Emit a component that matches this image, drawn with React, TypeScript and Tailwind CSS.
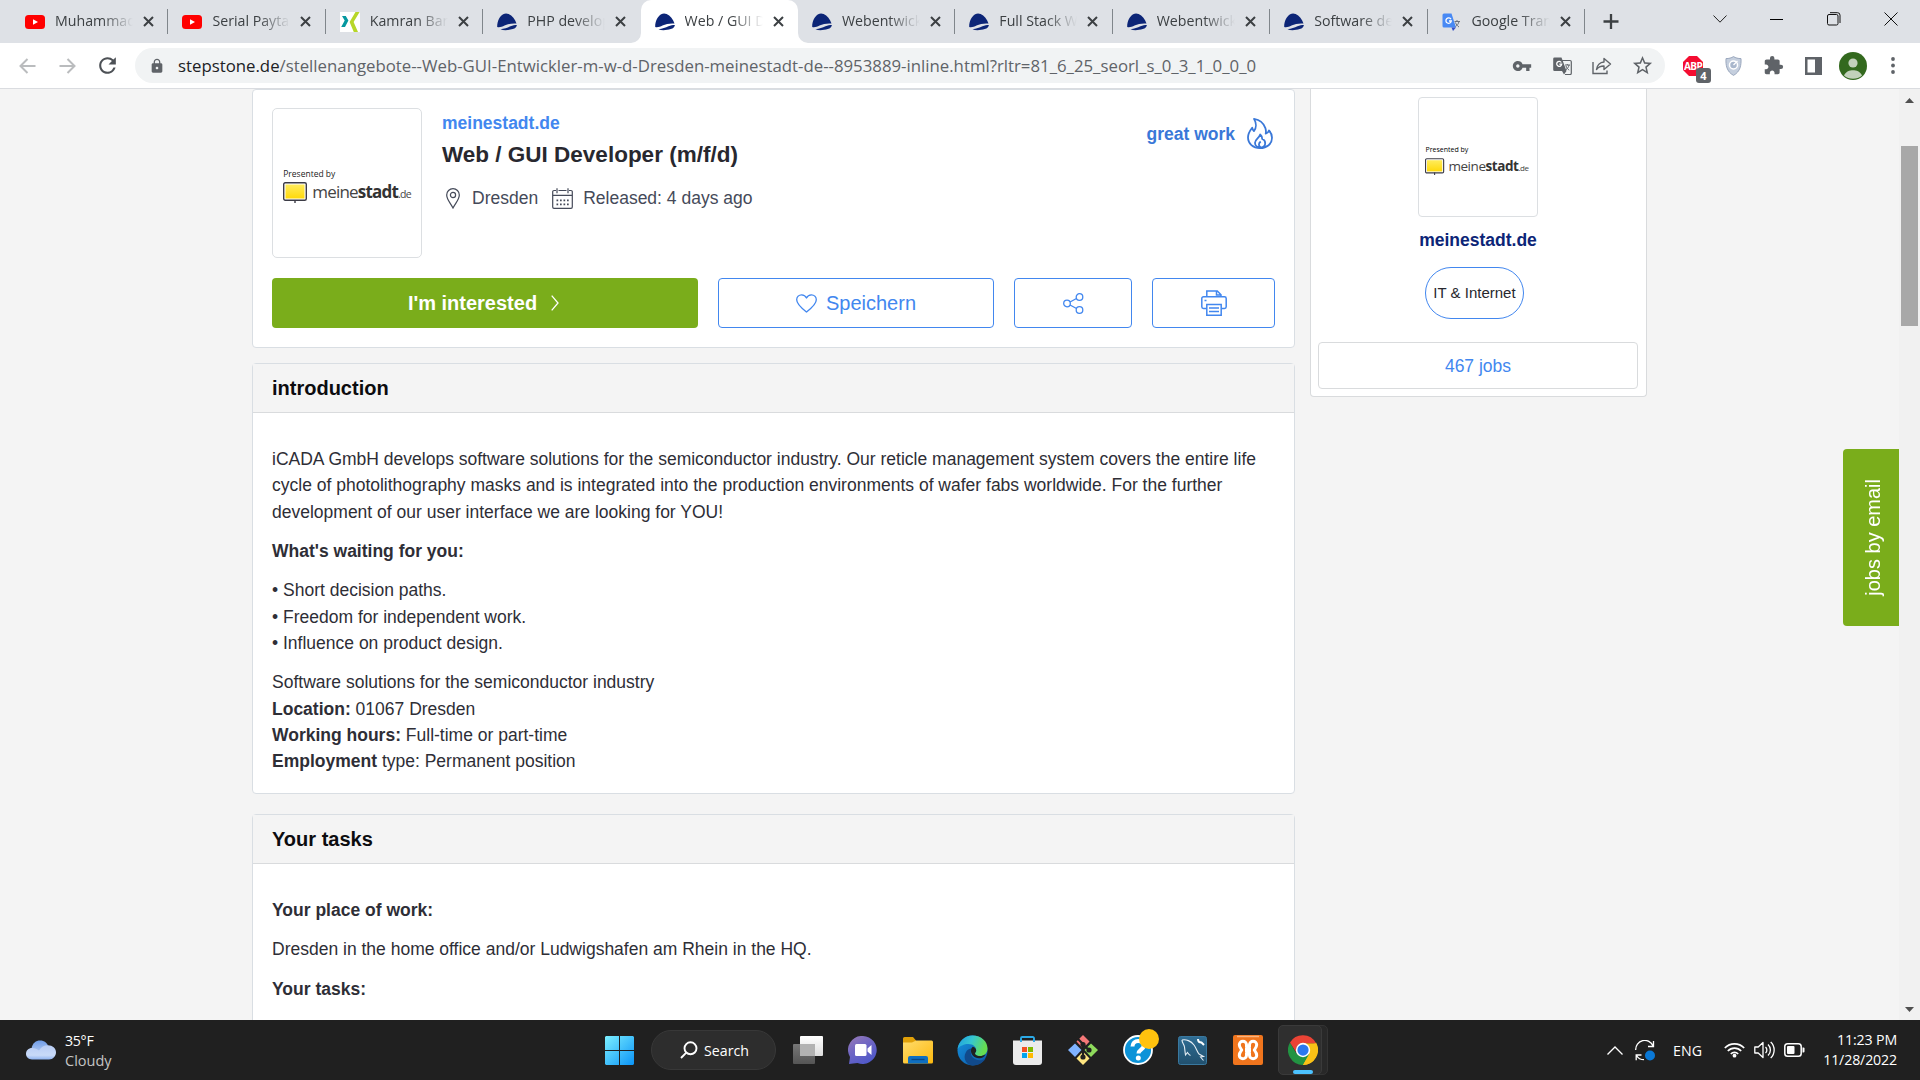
import React from "react";
import { MdVpnKey, MdExtension, MdLock, MdStarOutline, MdRefresh } from "react-icons/md";

const arial = "font-['Liberation_Sans',Arial,sans-serif]";
const ui = "font-['Open_Sans','Noto_Sans',sans-serif]";

/* ---------- favicons ---------- */

function YouTubeIcon() {
  return (
    <svg width="20" height="20" viewBox="0 0 20 20">
      <rect x="0" y="3" width="20" height="14" rx="3.5" fill="#f00" />
      <path d="M8 7.2v5.6l5-2.8z" fill="#fff" />
    </svg>
  );
}

function XingIcon() {
  return (
    <svg width="20" height="20" viewBox="0 0 20 20">
      <rect width="20" height="20" fill="#fff" />
      <path d="M2 4h3.8l2.6 4.6L5 15H1.2l3.5-6.4z" fill="#0698a0" />
      <path d="M15.5 0H19.6l-6 10 4.4 10h-4.2L9.6 10z" fill="#b7d629" />
    </svg>
  );
}

function StepstoneIcon() {
  return (
    <svg width="20" height="20" viewBox="0 0 20 20">
      <path d="M0.2 15C0 9 3 4 6.200 2.200c1.600-.9 3.600-1 5.400-.2 3.600 1.600 6.600 5.400 7.900 9.600C15 11.200 11 12 7.500 13.600 5 14.800 2.500 15.600.2 15z" fill="#0c2577" />
      <path d="M3.500 17.300c4-.4 7-1.700 10-3 2.200-.9 4.200-1.400 6.400-1.400-.2 2-1.600 3.300-4.200 4.100-3.600 1.100-8.600 1.800-12.200.3z" fill="#0c2577" />
    </svg>
  );
}

function TranslateFavicon() {
  return (
    <svg width="20" height="20" viewBox="0 0 20 20">
      <path d="M7 4.500h10.500a1.500 1.500 0 0 1 1.500 1.500v11a1.500 1.500 0 0 1-1.500 1.500H12z" fill="#dfe1e5" />
      <path d="M2 1.500h7.500L14 15.500H2A1.500 1.500 0 0 1 .5 14V3A1.500 1.500 0 0 1 2 1.500z" fill="#4889f4" />
      <path d="M9.500 15.500H14l-3 3.500z" fill="#3450c8" />
      <path d="M9 7.300A2.700 2.700 0 1 0 9.300 9H7" fill="none" stroke="#fff" strokeWidth="1.300" />
      <path d="M12.500 9.500h5.500M15 8v1.500M17 9.500c-.5 2.500-2 4-3.500 5M13.500 10.500c.5 2 2 3.500 3.500 4.500" fill="none" stroke="#6b7280" strokeWidth="1" />
    </svg>
  );
}

const tabs = [
  { title: "Muhammad", icon: "yt" },
  { title: "Serial Paytaht", icon: "yt" },
  { title: "Kamran Bang", icon: "xing" },
  { title: "PHP develop", icon: "step" },
  { title: "Web / GUI De", icon: "step", active: true },
  { title: "Webentwickl", icon: "step" },
  { title: "Full Stack We", icon: "step" },
  { title: "Webentwickl", icon: "step" },
  { title: "Software dev", icon: "step" },
  { title: "Google Trans", icon: "gt" },
];

function Favicon({ kind }: { kind: string }) {
  if (kind === "yt") return <YouTubeIcon />;
  if (kind === "xing") return <XingIcon />;
  if (kind === "gt") return <TranslateFavicon />;
  return <StepstoneIcon />;
}

function TabStrip() {
  return (
    <div className="flex h-[43px] bg-[#dee1e6] pl-[11px]">
      {tabs.map((t, i) => (
        <div
          key={i}
          className={
            "relative flex h-[43px] w-[157.400px] shrink-0 items-center pl-[14px] " +
            (t.active ? "rounded-t-[10px] bg-white" : "")
          }
        >
          {t.active && (
            <>
              <svg className="absolute bottom-0 -left-[10px]" width="10" height="10"><path d="M10 0v10H0A10 10 0 0 0 10 0z" fill="#fff" /></svg>
              <svg className="absolute bottom-0 -right-[10px]" width="10" height="10"><path d="M0 0v10h10A10 10 0 0 1 0 0z" fill="#fff" /></svg>
            </>
          )}
          <Favicon kind={t.icon} />
          <span className="mb-[2px] ml-[10px] w-[78px] overflow-hidden text-[14.200px] leading-5 whitespace-nowrap text-[#3c4043] [mask-image:linear-gradient(to_right,black_60%,transparent)]">
            {t.title}
          </span>
          <svg className="ml-[10px]" width="11" height="11" viewBox="0 0 11 11">
            <path d="M1 1l9 9M10 1l-9 9" stroke="#3c4043" strokeWidth="2" />
          </svg>
          {!t.active && i !== 3 && <div className="absolute top-[9px] right-0 h-[25px] w-px bg-[#80868b]" />}
        </div>
      ))}
      <svg className="mt-[14px] ml-[18px]" width="16" height="15" viewBox="0 0 16 15">
        <path d="M8 0v15M0.500 7.500h15" stroke="#3c4043" strokeWidth="2.300" />
      </svg>
      <div className="ml-auto flex h-[38px] items-center">
        <div className="flex w-[57px] justify-center"><svg width="14" height="8" viewBox="0 0 14 8"><path d="M.5.5L7 7.200 13.500.5" fill="none" stroke="#222" /></svg></div>
        <div className="flex w-[57px] justify-center"><div className="h-px w-[13px] bg-black" /></div>
        <div className="flex w-[57px] justify-center">
          <svg width="14" height="14" viewBox="0 0 14 14" fill="none" stroke="#111">
            <rect x=".5" y="2.500" width="10.500" height="10.500" rx="1.500" />
            <path d="M3 .7h7.500A2.500 2.500 0 0 1 13 3.200V11" />
          </svg>
        </div>
        <div className="flex w-[58px] justify-center"><svg width="14" height="14" viewBox="0 0 14 14"><path d="M.5.5l13 13M13.500.5l-13 13" stroke="#111" /></svg></div>
      </div>
    </div>
  );
}

function Cell({ children }: { children: React.ReactNode }) {
  return <div className="relative flex w-10 items-center justify-center">{children}</div>;
}

function Toolbar() {
  return (
    <div className="flex h-[46px] items-center border-b border-[#dadce0] bg-white pl-[7px] text-[#5f6368]">
      <Cell>
        <svg width="17" height="16" viewBox="0 0 17 16" fill="none" stroke="#babcbe" strokeWidth="2"><path d="M16.500 8H1.500M8.500 1L1.500 8l7 7" /></svg>
      </Cell>
      <Cell>
        <svg width="17" height="16" viewBox="0 0 17 16" fill="none" stroke="#babcbe" strokeWidth="2"><path d="M.5 8h15M8.500 1l7 7-7 7" /></svg>
      </Cell>
      <Cell><MdRefresh size={25} color="#4d5156" /></Cell>
      <div className="ml-[8px] flex h-[35px] w-[1530px] items-center rounded-full bg-[#f1f3f4] pl-[14px]">
        <MdLock size={16} />
        <span className="ml-[13px] text-[16.800px] leading-6 whitespace-nowrap">
          <span className="text-[#202124]">stepstone.de</span>
          /stellenangebote--Web-GUI-Entwickler-m-w-d-Dresden-meinestadt-de--8953889-inline.html?rltr=81_6_25_seorl_s_0_3_1_0_0_0
        </span>
        <div className="mr-[3px] ml-auto flex">
          <Cell><MdVpnKey size={20} /></Cell>
          <Cell>
            <svg width="19" height="18" viewBox="0 0 19 18">
              <path d="M8 3.500h9a1.300 1.300 0 0 1 1.300 1.300v11.400A1.300 1.300 0 0 1 17 17.500h-5" fill="none" stroke="#5f6368" strokeWidth="1.200" />
              <path d="M1.500.5h7l5 13.500h-12A1.300 1.300 0 0 1 .2 12.700V1.800A1.300 1.300 0 0 1 1.500.5zM9 14h4.500l-2.500 3.500z" fill="#5f6368" />
              <path d="M8.300 5.500A2.500 2.500 0 1 0 8.700 7.200H6.300" fill="none" stroke="#fff" strokeWidth="1.300" />
              <path d="M12 8h5M14.300 7v1M16 8c-.4 2.200-1.600 3.600-3 4.700M13 9c.6 2 1.800 3.200 3.200 4.200" fill="none" stroke="#5f6368" />
            </svg>
          </Cell>
          <Cell>
            <svg width="20" height="18" viewBox="0 0 20 18" fill="none" stroke="#5f6368" strokeWidth="1.400">
              <path d="M1 5v11.500h14V13.500" />
              <path d="M4.500 12.500C5 8.500 8 5.300 12 5V1.500l6.500 5.500-6.500 5.500V9c-3.500 0-5.800 1-7.500 3.500z" strokeLinejoin="round" />
            </svg>
          </Cell>
          <Cell><MdStarOutline size={23} /></Cell>
        </div>
      </div>
      <div className="ml-[8px] flex h-9">
        <Cell>
          <svg width="20" height="20" viewBox="0 0 20 20"><path d="M6 0h8l6 6v8l-6 6H6l-6-6V6z" fill="#f40d31" /></svg>
          <span className="absolute top-[10px] left-[11px] text-[10px] leading-4 font-bold tracking-[-0.600px] text-white">ABP</span>
          <span className="absolute top-[20px] left-[23px] flex h-[15px] w-[15px] items-center justify-center rounded-[3px] bg-[#5f6368] text-[11px] leading-none font-bold text-white">4</span>
        </Cell>
        <Cell>
          <svg width="17" height="20" viewBox="0 0 17 20">
            <path d="M8.500.6c2 1.300 4.500 2 7.500 2C16.300 9 15.500 15.500 8.500 19.400 1.500 15.500.7 9 1 2.600c3 0 5.500-.7 7.500-2z" fill="#c5cfde" stroke="#9aa7bd" />
            <circle cx="8.500" cy="9" r="4" fill="#a9b7cc" stroke="#fff" strokeWidth="1.500" />
            <path d="M8.500 9l4-4" stroke="#fff" strokeWidth="1.300" />
          </svg>
        </Cell>
        <Cell><MdExtension size={21} /></Cell>
        <Cell>
          <svg width="17" height="18" viewBox="0 0 17 18"><path d="M0 0h17v18H0zM2.500 2.500v13h7.500v-13z" fillRule="evenodd" fill="#5f6368" /></svg>
        </Cell>
        <Cell>
          <svg width="28" height="28" viewBox="0 0 28 28">
            <circle cx="14" cy="14" r="14" fill="#33691e" />
            <circle cx="14" cy="11" r="4.600" fill="#c2d1bb" />
            <path d="M5 23.500c2-4 5.500-5.200 9-5.200s7 1.200 9 5.200a14 14 0 0 1-18 0z" fill="#c2d1bb" />
          </svg>
        </Cell>
        <Cell>
          <svg width="4" height="17" viewBox="0 0 4 17" fill="#5f6368"><circle cx="2" cy="2" r="1.900" /><circle cx="2" cy="8.500" r="1.900" /><circle cx="2" cy="15" r="1.900" /></svg>
        </Cell>
      </div>
    </div>
  );
}

/* ---------- job page ---------- */

function MeinestadtLogo({ small }: { small?: boolean }) {
  return (
    <div className={"flex flex-col " + ui}>
      <span className={small ? "text-[7px] leading-[10px] text-black" : "text-[8.500px] leading-[12px] text-[#222]"}>Presented by</span>
      <div className={"flex items-center " + (small ? "mt-[3px]" : "mt-[2px]")}>
        <svg width={small ? 20 : 25} height={small ? 18 : 22} viewBox="0 0 25 22">
          <defs>
            <linearGradient id="sign" x1="0" y1="0" x2="0" y2="1"><stop offset="0" stopColor="#ffec5c" /><stop offset="1" stopColor="#ffd90a" /></linearGradient>
          </defs>
          <rect x=".7" y=".7" width="22.600" height="17.600" rx="1.500" fill="#fff" stroke="#3c3c46" strokeWidth="1.400" />
          <rect x="2.500" y="2.500" width="19" height="14" fill="url(#sign)" />
          <path d="M12 18v3" stroke="#3c3c46" strokeWidth="1.400" />
        </svg>
        <span className={"whitespace-nowrap text-[#444] " + (small ? "ml-[3px] text-[13.500px] leading-4 tracking-[-0.450px]" : "ml-[4px] text-[17px] leading-5 tracking-[-0.800px]")}>
          meine<b className="text-[#333]">stadt</b><span className={small ? "text-[8px]" : "text-[10.500px]"}>.de</span>
        </span>
      </div>
    </div>
  );
}

function HeaderCard() {
  return (
    <section className="h-[259px] shrink-0 rounded-[4px] border border-[#d9dee3] bg-white px-[19px] pt-[18px]">
      <div className="flex">
        <div className="flex h-[150px] w-[150px] items-center justify-center rounded-[5px] border border-[#dcdfe2] pt-[5px]">
          <MeinestadtLogo />
        </div>
        <div className="ml-5 flex flex-col">
          <span className="mt-[2px] text-[17.500px] leading-[26px] font-bold text-[#4287ef]">meinestadt.de</span>
          <h1 className="mt-[4px] text-[22.500px] leading-[30px] font-bold text-[#28282f]">Web / GUI Developer (m/f/d)</h1>
          <div className="mt-[15px] flex items-center text-[17.500px] leading-[26px] text-[#454a59]">
            <svg className="ml-[4px]" width="14" height="21" viewBox="0 0 14 21" fill="none" stroke="#454a59" strokeWidth="1.200">
              <path d="M7 20C4.500 15 .7 11.500.7 7a6.300 6.300 0 0 1 12.600 0C13.300 11.500 9.500 15 7 20z" />
              <circle cx="7" cy="7" r="2.600" />
            </svg>
            <span className="ml-[12px]">Dresden</span>
            <svg className="ml-[14px]" width="21" height="21" viewBox="0 0 21 21" fill="none" stroke="#454a59" strokeWidth="1.200">
              <path d="M4 2.500H2A1.300 1.300 0 0 0 .7 3.800V19A1.300 1.300 0 0 0 2 20.300h17a1.300 1.300 0 0 0 1.300-1.300V3.800A1.300 1.300 0 0 0 19 2.500h-2M6.500 2.500h8M5 .3v5M16 .3v5M.7 7.300h19.600" />
              <path d="M4.500 12.300h12.500M4.500 16.300h12.500" strokeWidth="1.700" strokeDasharray="1.700 1.800" />
            </svg>
            <span className="ml-[10px]">Released: 4 days ago</span>
          </div>
        </div>
        <div className="mt-[9px] mr-[2px] ml-auto flex h-[32px] items-center">
          <span className="mt-[2px] text-[17.500px] font-bold text-[#3a78d8]">great work</span>
          <svg className="ml-[12px]" width="26" height="31" viewBox="0 0 26 31" fill="none" stroke="#3a78d8" strokeWidth="1.800" strokeLinejoin="round">
            <path d="M7 .9c6.500 1 10 5 11.500 9.500.6 2 .6 3.500.2 5.300 1.700-.5 2.700-1.500 3.300-3.200 1.500 1.500 3 4 3 7.300 0 6-5 10.300-12 10.300S1 25.600 1 19.300C1 15.500 3 12.500 5.200 9.700c.3 1.500.8 2.600 1.700 3.400C9.500 10 9.500 5 7 .9z" />
            <path d="M13 29.500c-3 0-5-2-5-4.700 0-3.500 4-4.300 5.200-8.300 1.500 1.300 2.200 2.700 2 4.500 1.800.5 3 2.200 3 4.200 0 2.500-2 4.300-5.200 4.300zM13.500 29c-2-1-2.300-3.500.2-5.500" />
          </svg>
        </div>
      </div>
      <div className="mt-[20px] flex h-[50px] text-[20px]">
        <button className="flex w-[426px] items-center justify-center gap-[14px] rounded-[4px] bg-[#7aad1b] pr-[3px] font-bold text-white">
          I'm interested
          <svg width="8" height="16" viewBox="0 0 8 16" fill="none" stroke="#fff" strokeWidth="1.300"><path d="M.7.7L7 8 .7 15.300" /></svg>
        </button>
        <button className="ml-5 flex w-[276px] items-center justify-center gap-[9px] rounded-[4px] border border-[#4287ef] text-[#4287ef]">
          <svg width="21" height="19" viewBox="0 0 21 19" fill="none" stroke="#4287ef" strokeWidth="1.300" strokeLinejoin="round"><path d="M10.500 18C6 14.500.7 10.500.7 5.800A5 5 0 0 1 5.600.8c2.200 0 4 1.200 4.900 3.200.9-2 2.700-3.200 4.900-3.200a5 5 0 0 1 4.900 5c0 4.700-5.300 8.700-9.800 12.200z" /></svg>
          Speichern
        </button>
        <button className="ml-5 flex w-[118px] items-center justify-center rounded-[4px] border border-[#4287ef]">
          <svg width="21" height="21" viewBox="0 0 21 21" fill="none" stroke="#4287ef" strokeWidth="1.300">
            <circle cx="4" cy="10.500" r="3.300" /><circle cx="16.500" cy="4" r="3.300" /><circle cx="16.500" cy="17" r="3.300" /><path d="M7 9l6.500-3.500M7 12l6.500 3.500" />
          </svg>
        </button>
        <button className="ml-5 flex w-[123px] items-center justify-center rounded-[4px] border border-[#4287ef]">
          <svg width="26" height="26" viewBox="0 0 26 26" fill="none" stroke="#4287ef" strokeWidth="1.500">
            <path d="M5.800 6.500V1h10.500l3.700 3.700v1.800M15.500 1v4H20" />
            <path d="M5.500 18.500H2.500A1.700 1.700 0 0 1 .8 16.800V8.500a1.700 1.700 0 0 1 1.700-1.700h21a1.700 1.700 0 0 1 1.700 1.700v8.300a1.700 1.700 0 0 1-1.700 1.700h-3" />
            <path d="M5.800 14.500h14.400v10.700H5.800zM8 18h10M8 21.500h10M3.500 10.500h2" />
          </svg>
        </button>
      </div>
    </section>
  );
}

function Section({ title, className, children }: { title: string; className: string; children: React.ReactNode }) {
  return (
    <section className={"rounded-[4px] border border-[#d9dee3] bg-white " + className}>
      <h2 className="flex h-[49px] items-center border-b border-[#d9dbdd] bg-[#f4f4f4] px-[19px] text-[20px] font-bold text-[#0c0c0f]">{title}</h2>
      <div className="flex flex-col gap-[13.200px] px-[19px] pt-[33px] text-[17.500px] leading-[26.250px] whitespace-nowrap text-[#2e2e36]">{children}</div>
    </section>
  );
}

function Sidebar() {
  return (
    <aside className="ml-[15px] flex h-[308px] w-[337px] flex-col items-center rounded-b-[4px] border border-t-0 border-[#d9dbdd] bg-white pt-[8px] pr-[1px]">
      <div className="flex h-[120px] w-[120px] items-center justify-center rounded-[4px] border border-[#dcdfe2] pt-[7px] pr-[2px]">
        <MeinestadtLogo small />
      </div>
      <span className="mt-[10px] text-[17.500px] leading-[26px] font-bold text-[#0c2577]">meinestadt.de</span>
      <span className="mt-[14px] mr-[7px] flex h-[52px] w-[99px] items-center justify-center rounded-[26px] border border-[#4287ef] text-[15px] text-[#28282f]">IT &amp; Internet</span>
      <span className="mt-[23px] flex h-[47px] w-[320px] items-center justify-center rounded-[4px] border border-[#d9dbdd] pt-px text-[17.500px] text-[#4287ef]">467 jobs</span>
    </aside>
  );
}

function Page() {
  return (
    <main className={"relative flex h-[931px] overflow-hidden bg-[#f4f4f4] pl-[252px] " + arial}>
      <div className="flex w-[1043px] flex-col">
        <HeaderCard />
        <Section title="introduction" className="mt-[15px] h-[431px] shrink-0">
          <p>
            iCADA GmbH develops software solutions for the semiconductor industry. Our reticle management system covers the entire life<br />
            cycle of photolithography masks and is integrated into the production environments of wafer fabs worldwide. For the further<br />
            development of our user interface we are looking for YOU!
          </p>
          <p className="font-bold">What's waiting for you:</p>
          <p>• Short decision paths.<br />• Freedom for independent work.<br />• Influence on product design.</p>
          <p>
            Software solutions for the semiconductor industry<br />
            <b>Location:</b> 01067 Dresden<br />
            <b>Working hours:</b> Full-time or part-time<br />
            <b>Employment</b> type: Permanent position
          </p>
        </Section>
        <Section title="Your tasks" className="mt-[20px] h-[300px] shrink-0">
          <p className="font-bold">Your place of work:</p>
          <p>Dresden in the home office and/or Ludwigshafen am Rhein in the HQ.</p>
          <p className="font-bold">Your tasks:</p>
        </Section>
      </div>
      <Sidebar />
      <div className="absolute top-[360px] right-[21px] flex h-[177px] w-[56px] items-center justify-center rounded-l-[4px] bg-[#7aad1b] pl-[4px]">
        <span className="rotate-180 text-[20px] leading-6 whitespace-nowrap text-white [writing-mode:vertical-rl]">jobs by email</span>
      </div>
      <div className="ml-auto flex h-full w-[21px] flex-col items-center bg-[#f1f1f1]">
        <svg className="mt-[9px]" width="9" height="5" viewBox="0 0 9 5"><path d="M0 5L4.500 0 9 5z" fill="#505050" /></svg>
        <div className="mt-[43px] h-[180px] w-[17px] bg-[#a8a8a8]" />
        <svg className="mt-auto mb-[8px]" width="9" height="5" viewBox="0 0 9 5"><path d="M0 0h9L4.500 5z" fill="#505050" /></svg>
      </div>
    </main>
  );
}

/* ---------- taskbar ---------- */

function Slot({ children }: { children: React.ReactNode }) {
  return <div className="relative flex h-[60px] w-[55px] items-center justify-center">{children}</div>;
}

function Taskbar() {
  return (
    <footer className="flex h-[60px] items-center bg-[#202020] text-[14.200px] leading-5 text-white">
      <div className="flex w-[592px] items-center pl-[26px]">
        <svg width="30" height="20" viewBox="0 0 30 20">
          <defs>
            <linearGradient id="cloudBack" x1="0" y1="0" x2="0" y2="1"><stop offset="0" stopColor="#6f9de8" /><stop offset="1" stopColor="#bcd0f5" /></linearGradient>
            <linearGradient id="cloudFront" x1="0" y1="0" x2="0" y2="1"><stop offset="0" stopColor="#b8cdf5" /><stop offset=".7" stopColor="#c9daf8" /><stop offset="1" stopColor="#8fb3f0" /></linearGradient>
          </defs>
          <path d="M5.500 8.500C6.500 3 10 .5 14 .5c4.500 0 7.500 2.500 8.200 6.500L18 15H8z" fill="url(#cloudBack)" />
          <path d="M6 8c3 0 5 1 7 2.500C15 7 18 5.300 22 5.300c4.500 0 8 3 8 7s-3 7.200-7 7.200H6c-3.500 0-6-2.500-6-5.700S2.500 8 6 8z" fill="url(#cloudFront)" />
        </svg>
        <div className="mt-[2px] ml-[9px] flex flex-col">
          <span className="tracking-[-0.300px]">35°F</span>
          <span className="text-[14.500px] text-[#c4c4c4]">Cloudy</span>
        </div>
      </div>
      <Slot>
        <svg width="29" height="29" viewBox="0 0 29 29">
          <defs><linearGradient id="win" x1="0" y1="0" x2="1" y2="1"><stop offset="0" stopColor="#7cefff" /><stop offset="1" stopColor="#0b94f7" /></linearGradient></defs>
          <path d="M1 0h13v14H0V1zM15 0h13l1 1v13H15zM0 15h14v14H1l-1-1zM15 15h14v13l-1 1H15z" fill="url(#win)" />
        </svg>
      </Slot>
      <div className="ml-[4px] flex h-10 w-[125px] items-center rounded-full border border-[#383838] bg-[#2d2d2d] pl-[28px]">
        <svg width="18" height="18" viewBox="0 0 18 18" fill="none" stroke="#fff" strokeWidth="1.900"><circle cx="10.500" cy="7.300" r="6" /><path d="M6.300 11.700L1 17" /></svg>
        <span className="mt-px ml-[6px]">Search</span>
      </div>
      <div className="ml-[4px] flex">
        <Slot>
          <svg width="30" height="28" viewBox="0 0 30 28">
            <defs>
              <linearGradient id="tvBack" x1="0" y1="0" x2="0" y2="1"><stop offset="0" stopColor="#777" /><stop offset="1" stopColor="#555" /></linearGradient>
              <linearGradient id="tvFront" x1="0" y1="0" x2="0" y2="1"><stop offset="0" stopColor="#fff" /><stop offset="1" stopColor="#ddd" /></linearGradient>
            </defs>
            <rect y="8" width="22" height="20" rx="1" fill="url(#tvBack)" />
            <rect x="7" y="0" width="23" height="20" rx="1" fill="url(#tvFront)" />
            <rect x="7" y="8" width="15" height="12" fill="#b2b2b2" />
          </svg>
        </Slot>
        <Slot>
          <svg width="29" height="28" viewBox="0 0 29 28">
            <defs><linearGradient id="chat" x1="0" y1="0" x2=".6" y2="1"><stop offset="0" stopColor="#9a7bb5" /><stop offset=".5" stopColor="#6f66c4" /><stop offset="1" stopColor="#5059c9" /></linearGradient></defs>
            <path d="M15 0a14 14 0 1 1-5.500 27L1 28l1-7A14 14 0 0 1 15 0z" fill="url(#chat)" />
            <rect x="7" y="8" width="11.500" height="12" rx="1.500" fill="#fff" />
            <path d="M19.500 12.500l4-3.500v10l-4-3.500z" fill="#fff" />
          </svg>
        </Slot>
        <Slot>
          <svg width="30" height="27" viewBox="0 0 30 27">
            <defs><linearGradient id="folder" x1="0" y1="0" x2="1" y2="1"><stop offset="0" stopColor="#ffdc6c" /><stop offset="1" stopColor="#fdb90e" /></linearGradient></defs>
            <path d="M1.500 0H10l3 3.500V10H0V1.500A1.500 1.500 0 0 1 1.500 0z" fill="#e0a008" />
            <path d="M0 5.500h9l4-2h15.500A1.500 1.500 0 0 1 30 5v20a1.500 1.500 0 0 1-1.500 1.500h-27A1.500 1.500 0 0 1 0 25z" fill="url(#folder)" />
            <path d="M5 26.500V21a2 2 0 0 1 2-2h16a2 2 0 0 1 2 2v5.500z" fill="#0f6fc0" />
            <path d="M8.500 22.500h13" stroke="#0a4784" strokeWidth="1.300" />
          </svg>
        </Slot>
        <Slot>
          <svg width="31" height="31" viewBox="0 0 31 31">
            <defs>
              <linearGradient id="edgeTop" x1="0" y1="0" x2="1" y2=".3"><stop offset="0" stopColor="#1d9ee0" /><stop offset=".5" stopColor="#36c6d0" /><stop offset="1" stopColor="#66dd50" /></linearGradient>
              <linearGradient id="edgeLow" x1="0" y1="0" x2="1" y2="1"><stop offset="0" stopColor="#1593de" /><stop offset="1" stopColor="#0c55a5" /></linearGradient>
            </defs>
            <circle cx="15.500" cy="15.500" r="15" fill="url(#edgeLow)" />
            <path d="M.6 14C2 6 8 .5 15.500.5c9 0 15 6 15 13 0 5-3.500 7.500-7.500 7.500-3 0-5-1.200-5-2.500 0-1 1.200-1.500 1.200-3.500 0-3-3-6-7.700-6C7 9 2.500 11 .6 14z" fill="url(#edgeTop)" />
            <path d="M14.500 13.500c-1.500 3-1 8 3.500 10.500 3.500 2 7.500 1.500 10.500-.5-3.500 6-10 8-15.500 6.500-5-2-7-8-4-13 1-2 3.500-3.500 5.500-3.500z" fill="#114a8b" />
            <path d="M15.800 11.700c2.200.5 3.400 2 3.400 3.700 0 1.500-1.200 2-1.200 3 0 1.500 2 2.600 5 2.600 2 0 4-.6 5.500-2-1 3.500-4 4.500-6.500 4.300-5-.3-8.300-4-8-8 .1-1.500.8-2.800 1.800-3.600z" fill="#202020" />
          </svg>
        </Slot>
        <Slot>
          <svg width="29" height="29" viewBox="0 0 29 29">
            <path d="M8 7V2.200A1.200 1.200 0 0 1 9.200 1h10.600A1.200 1.200 0 0 1 21 2.200V7" fill="none" stroke="#2ba9e6" strokeWidth="1.900" />
            <path d="M0 4.500h29V26a3 3 0 0 1-3 3H3a3 3 0 0 1-3-3z" fill="#ebebeb" />
            <path d="M8 6V3.500M21 6V3.500" stroke="#2ba9e6" strokeWidth="1.900" />
            <path d="M9 11h5v5H9z" fill="#f25022" /><path d="M15 11h5v5h-5z" fill="#7fba00" /><path d="M9 17h5v5H9z" fill="#00a4ef" /><path d="M15 17h5v5h-5z" fill="#ffb900" />
          </svg>
        </Slot>
        <Slot>
          <svg width="30" height="30" viewBox="0 0 30 30">
            <path d="M15 0l6.500 6.500L15 13.500 8.500 6.500z" fill="#f57878" />
            <path d="M23 8.500l7 6.500-7 7-6.500-7z" fill="#8fdb5c" />
            <path d="M7 8.500l6.500 6.500L7 22l-7-7z" fill="#80b3ff" />
            <path d="M15 16.500l6.500 7L15 30l-6.500-6.500z" fill="#ffe680" />
            <path d="M10 4l5 5v13M15 9.500l6 5.500" stroke="#202020" strokeWidth="2.200" fill="none" />
            <circle cx="15" cy="9.500" r="2.600" fill="#202020" /><circle cx="21" cy="15" r="2.600" fill="#202020" /><circle cx="15" cy="22" r="2.600" fill="#202020" />
          </svg>
        </Slot>
        <Slot>
          <svg width="30" height="30" viewBox="0 0 30 30">
            <circle cx="15" cy="15" r="14" fill="#0c93d8" stroke="#fff" strokeWidth="1.800" />
            <path d="M9.500 11.500c0-3.500 2.500-5.500 5.700-5.500s5.500 2 5.500 4.800c0 3.700-5.200 4-5.200 7.700" fill="none" stroke="#fff" strokeWidth="4" />
            <circle cx="15.300" cy="23" r="2.500" fill="#fff" />
          </svg>
          <span className="absolute top-[9px] left-[29px] h-5 w-5 rounded-full bg-[#ffc20e]" />
        </Slot>
        <Slot>
          <svg width="29" height="29" viewBox="0 0 29 29">
            <defs><linearGradient id="sql" x1="0" y1="0" x2="0" y2="1"><stop offset="0" stopColor="#2f6d94" /><stop offset="1" stopColor="#21506e" /></linearGradient></defs>
            <rect x=".5" y=".5" width="28" height="28" rx="2" fill="url(#sql)" stroke="#39789f" />
            <path d="M4 4c4-1 9 1 12 5 2.500 3.500 3 6.500 5 9l4.500 2.500-3 .5 3 3.500M4 4c0 3 2 4 2.500 7 .3 2.500.5 5 1 8l2-2.500c1 1.500 1.500 2.500 3 3" fill="none" stroke="#e6eef4" strokeWidth="1.100" />
            <path d="M20 3c0 2.500 1.500 3.500 3.500 3.500L26 9" fill="none" stroke="#fff" strokeWidth="2" />
          </svg>
        </Slot>
        <Slot>
          <svg width="30" height="30" viewBox="0 0 30 30">
            <rect width="30" height="30" rx="2" fill="#f0751d" />
            <path d="M4 1.500h22" stroke="#f9b27c" strokeWidth="1.500" />
            <path d="M15 12h-1.500V9.800A3.600 3.600 0 0 0 6.300 9.800c0 2.200 1.200 3.600 2.400 5.200-1.200 1.600-2.400 3-2.400 5.200a3.600 3.600 0 0 0 7.200 0V18h3v2.200a3.600 3.600 0 0 0 7.200 0c0-2.200-1.200-3.600-2.400-5.200 1.200-1.600 2.400-3 2.400-5.200a3.600 3.600 0 0 0-7.200 0V12z" fill="none" stroke="#fff" strokeWidth="3" strokeLinejoin="round" />
            <path d="M12 15h6" stroke="#fff" strokeWidth="4" />
          </svg>
        </Slot>
        <Slot>
          <div className="absolute top-[5px] left-[9px] h-[50px] w-[44px] rounded-[5px] border border-[#333] bg-[#282828]" />
          <div className="absolute top-[5px] left-[3px] h-[50px] w-[44px] rounded-[5px] border border-[#3a3a3a] bg-[#2f2f2f]" />
          <svg className="relative" width="30" height="30" viewBox="0 0 48 48">
            <path d="M24 24h0L44.800 12A24 24 0 0 1 24 48z" fill="#fbc116" />
            <path d="M24 24v0l10.400 6L24 48A24 24 0 0 1 3.200 12L13.600 30z" fill="#229342" />
            <path d="M24 13h20.800A24 24 0 0 1 24 48l10.400-18z" fill="#fbc116" />
            <path d="M3.200 12A24 24 0 0 1 44.800 13H24A11 11 0 0 0 14 29z" fill="#ea4335" />
            <circle cx="24" cy="24" r="11.500" fill="#fff" /><circle cx="24" cy="24" r="9" fill="#2b78ee" />
          </svg>
          <span className="absolute top-[50px] left-[18px] h-1 w-5 rounded-full bg-[#4cc2ff]" />
        </Slot>
      </div>
      <div className="ml-auto flex items-center pr-[23px]">
        <svg width="16" height="9" viewBox="0 0 16 9" fill="none" stroke="#fff" strokeWidth="1.300"><path d="M.5 8.500L8 1l7.500 7.500" /></svg>
        <svg className="ml-[12px]" width="20" height="21" viewBox="0 0 20 21" fill="none" stroke="#fff" strokeWidth="1.300">
          <path d="M.7 10A9 9 0 0 1 18 6M18.500 1v5.500H13M6.500 15H1.200v5.300M1.500 15.500C3 18 6 19.700 9 19.700" />
          <circle cx="15" cy="15.500" r="5" fill="#0a78d6" stroke="none" />
        </svg>
        <span className="mt-px ml-[18px]">ENG</span>
        <svg className="ml-[22px]" width="21" height="16" viewBox="0 0 21 16" fill="none" stroke="#fff" strokeWidth="1.600">
          <path d="M.8 6a13.500 13.500 0 0 1 19.400 0M3.800 9a9.300 9.300 0 0 1 13.400 0M6.800 12a5 5 0 0 1 7.400 0" /><circle cx="10.500" cy="13.700" r="1.900" fill="#fff" stroke="none" />
        </svg>
        <svg className="ml-[9px]" width="21" height="18" viewBox="0 0 21 18" fill="none" stroke="#fff" strokeWidth="1.300">
          <path d="M.8 6v6h3.400L9 16.500v-15L4.200 6z" strokeLinejoin="round" /><path d="M11.500 6a4 4 0 0 1 0 6M14 3.500a7.500 7.500 0 0 1 0 11M16.700 1a11 11 0 0 1 0 16" />
        </svg>
        <svg className="ml-[9px]" width="21" height="14" viewBox="0 0 21 14">
          <rect x=".8" y=".8" width="16.400" height="12.400" rx="2.800" fill="none" stroke="#fff" strokeWidth="1.500" /><rect x="3" y="3" width="7.500" height="8" rx="1" fill="#fff" /><path d="M18.500 4.500h1a1 1 0 0 1 1 1v3a1 1 0 0 1-1 1h-1z" fill="#fff" />
        </svg>
        <div className="flex w-[92px] flex-col text-right tracking-[-0.150px]">
          <span>11:23 PM</span>
          <span>11/28/2022</span>
        </div>
      </div>
    </footer>
  );
}

export default function App() {
  return (
    <div className={"flex h-[1080px] w-[1920px] flex-col overflow-hidden " + ui}>
      <TabStrip />
      <Toolbar />
      <Page />
      <Taskbar />
    </div>
  );
}
